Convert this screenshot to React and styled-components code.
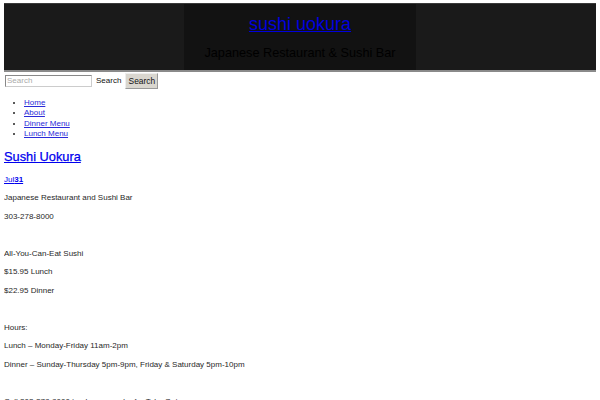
import React from "react";
import styled, { createGlobalStyle } from "styled-components";

const Global = createGlobalStyle`
  html, body { background: #fff; }
  body {
    margin: 3px 4px;
    font-family: "Liberation Sans", Arial, sans-serif;
    color: #222;
    font-size: 8px;
  }
  a { color: #0000ee; }
`;

const Header = styled.header`
  background: #1a1a1a;
  border-top: 1px solid #3a3a3a;
  border-bottom: 2px solid #8a8a8a;
  box-shadow: 1px 0 0 #d0d0d0;
  display: flex;
  justify-content: center;
  height: 66px;
`;

const Banner = styled.div`
  width: 232px;
  background: #121212;
  display: flex;
  flex-direction: column;
  align-items: center;
  padding-top: 10px;
`;

const SiteTitle = styled.a`
  font-size: 18px;
  line-height: 20px;
  color: #0000dd;
  text-decoration: underline;
  white-space: nowrap;
`;

const Tagline = styled.div`
  margin-top: 11px;
  font-size: 12.7px;
  line-height: 16px;
  color: #000;
  white-space: nowrap;
`;

const SearchRow = styled.form`
  display: flex;
  align-items: center;
  height: 17px;
  margin-top: 0;
  padding-left: 1px;
`;

const SearchInput = styled.input`
  width: 87px;
  height: 12px;
  box-sizing: border-box;
  border: 1px solid #888;
  border-right-color: #ccc;
  border-bottom-color: #ccc;
  padding: 0 1px;
  font-family: inherit;
  font-size: 8px;
  color: #222;
  &::placeholder { color: #aaa; }
`;

const SearchLabel = styled.label`
  margin-left: 4px;
  font-size: 8px;
  color: #111;
`;

const SearchButton = styled.button`
  margin-left: 4px;
  height: 16px;
  width: 33px;
  padding: 0;
  background: #d9d6cf;
  border: 1px solid;
  border-color: #eee #999 #999 #eee;
  font-family: inherit;
  font-size: 8.4px;
  color: #111;
`;

const NavList = styled.ul`
  margin: 9px 0 0;
  padding-left: 20px;
  list-style: disc;
  font-size: 8px;
  line-height: 10.4px;
  li::marker { color: #222; }
  a { color: #2a2ad8; }
`;

const PostTitle = styled.h2`
  margin: 9px 0 0;
  font-size: 12.8px;
  line-height: 15px;
  font-weight: normal;
  -webkit-text-stroke: 0.25px #0000ee;
  a { color: #0000ee; }
`;

const PostDate = styled.a`
  display: inline-block;
  margin-top: 11px;
  font-size: 8px;
  line-height: 10px;
  b { font-weight: bold; }
`;

const Entry = styled.div`
  margin-top: 8.5px;
  p {
    margin: 0 0 8px;
    font-size: 8px;
    line-height: 10.5px;
    color: #282828;
  }
`;

const paragraphs = [
  "Japanese Restaurant and Sushi Bar",
  "303-278-8000",
  "\u00a0",
  "All-You-Can-Eat Sushi",
  "$15.95 Lunch",
  "$22.95 Dinner",
  "\u00a0",
  "Hours:",
  "Lunch \u2013 Monday-Friday 11am-2pm",
  "Dinner \u2013 Sunday-Thursday 5pm-9pm, Friday & Saturday 5pm-10pm",
  "\u00a0",
  "Call 303-278-8000 to place an order for Take Out",
];

export default function App() {
  return (
    <>
      <Global />
      <Header>
        <Banner>
          <SiteTitle href="#">sushi uokura</SiteTitle>
          <Tagline>Japanese Restaurant &amp; Sushi Bar</Tagline>
        </Banner>
      </Header>
      <SearchRow onSubmit={(e) => e.preventDefault()}>
        <SearchInput placeholder="Search" />
        <SearchLabel>Search</SearchLabel>
        <SearchButton type="submit">Search</SearchButton>
      </SearchRow>
      <NavList>
        <li><a href="#">Home</a></li>
        <li><a href="#">About</a></li>
        <li><a href="#">Dinner Menu</a></li>
        <li><a href="#">Lunch Menu</a></li>
      </NavList>
      <PostTitle><a href="#">Sushi Uokura</a></PostTitle>
      <PostDate href="#">Jul<b>31</b></PostDate>
      <Entry>
        {paragraphs.map((t, i) => (
          <p key={i}>{t}</p>
        ))}
      </Entry>
    </>
  );
}
